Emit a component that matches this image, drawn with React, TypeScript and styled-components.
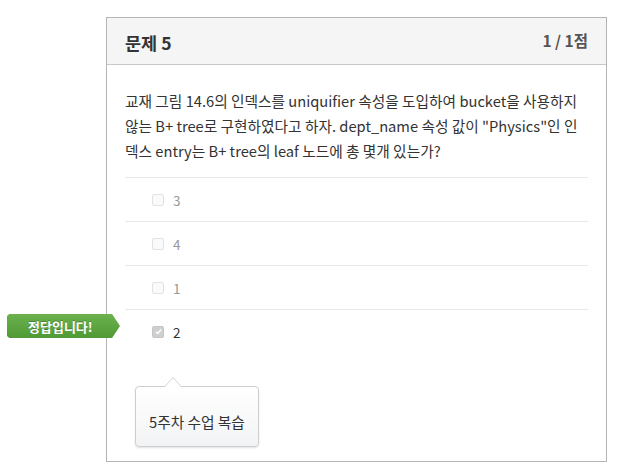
import React from "react";
import styled, {createGlobalStyle} from "styled-components";

type Option = {
    text: string,
    checked?: boolean,
}

const options: Option[] = [
    {text: "3"},
    {text: "4"},
    {text: "1"},
    {text: "2", checked: true},
];

export default function App() {
    return (
        <>
            <GlobalStyle/>
            <Card>
                <Header>
                    <Title>문제 5</Title>
                    <Score>1 / 1점</Score>
                </Header>
                <Body>
                    <Question>
                        교재 그림 14.6의 인덱스를 uniquifier 속성을 도입하여 bucket을 사용하지 않는 B+ tree로 구현하였다고 하자.
                        dept_name 속성 값이 "Physics"인 인덱스 entry는 B+ tree의 leaf 노드에 총 몇개 있는가?
                    </Question>
                    <OptionList>
                        {options.map(o => (
                            <OptionRow key={o.text}>
                                {o.checked && <CorrectLabel>정답입니다!</CorrectLabel>}
                                <Box $checked={o.checked}>
                                    {o.checked && (
                                        <svg width="9" height="9" viewBox="0 0 10 10">
                                            <path d="M2 5.2 L4.2 7.3 L8 2.8" fill="none" stroke="#fff" strokeWidth="1.6"/>
                                        </svg>
                                    )}
                                </Box>
                                <OptionText $checked={o.checked}>{o.text}</OptionText>
                            </OptionRow>
                        ))}
                    </OptionList>
                    <Feedback>5주차 수업 복습</Feedback>
                </Body>
            </Card>
        </>
    )
}

const GlobalStyle = createGlobalStyle`
    body {
        margin: 0;
        background: #ffffff;
        font-family: "Noto Sans CJK KR", "Noto Sans", sans-serif;
        color: #333;
    }
`

const Card = styled.div`
    width: 499px;
    margin: 17px 0 0 106px;
    border: 1px solid #b4b4b4;
    background: #fff;
`

const Header = styled.div`
    display: flex;
    justify-content: space-between;
    align-items: center;
    height: 44px;
    padding: 2px 18px 0 18px;
    background: #f5f5f5;
    border-bottom: 1px solid #c8c8c8;
`

const Title = styled.h2`
    margin: 0;
    font-size: 17.5px;
    font-weight: 700;
    color: #333;
`

const Score = styled.span`
    font-size: 15.5px;
    font-weight: 700;
    color: #555;
    margin-top: -4px;
`

const Body = styled.div`
    padding: 23px 18px 14px 18px;
`

const Question = styled.p`
    margin: 0 0 14px 0;
    font-size: 14.7px;
    line-height: 25px;
    color: #333;
`

const OptionList = styled.div`
    border-top: 1px solid #e8e8e8;
`

const OptionRow = styled.div`
    position: relative;
    display: flex;
    align-items: center;
    gap: 9px;
    height: 43px;
    padding-left: 27px;
    border-bottom: 1px solid #e8e8e8;

    &:last-child {
        border-bottom: none;
    }
`

const Box = styled.span<{ $checked?: boolean }>`
    display: inline-flex;
    align-items: center;
    justify-content: center;
    width: 10px;
    height: 10px;
    border: 1px solid ${p => p.$checked ? "#c6c6c6" : "#e2e2e2"};
    border-radius: 2px;
    background: ${p => p.$checked ? "#cfcfcf" : "#fafafa"};
`

const OptionText = styled.span<{ $checked?: boolean }>`
    font-size: 13.5px;
    color: ${p => p.$checked ? "#333" : "#999"};
`

const CorrectLabel = styled.div`
    position: absolute;
    left: -118px;
    top: 4px;
    width: 113px;
    height: 24px;
    display: flex;
    align-items: center;
    padding-left: 21px;
    box-sizing: border-box;
    font-size: 13px;
    font-weight: 700;
    color: #fff;
    background: linear-gradient(#6cb14e, #4f9a36);
    clip-path: polygon(0 8%, 2% 0, 93% 0, 100% 50%, 93% 100%, 2% 100%, 0 92%);
    text-shadow: 0 -1px 0 rgba(0, 0, 0, 0.25);
`

const Feedback = styled.div`
    position: relative;
    display: inline-block;
    margin: 33px 0 0 10px;
    padding: 24px 13px 14px 13px;
    font-size: 14.7px;
    color: #333;
    border: 1px solid #cfcfcf;
    border-radius: 4px;
    background: linear-gradient(#ffffff, #f2f3f4);
    box-shadow: 0 1px 2px rgba(0, 0, 0, 0.12);

    &::before, &::after {
        content: "";
        position: absolute;
        left: 28px;
        width: 0;
        height: 0;
        border-left: 9px solid transparent;
        border-right: 9px solid transparent;
    }

    &::before {
        top: -10px;
        border-bottom: 10px solid #cfcfcf;
    }

    &::after {
        top: -9px;
        border-bottom: 10px solid #fff;
    }
`
